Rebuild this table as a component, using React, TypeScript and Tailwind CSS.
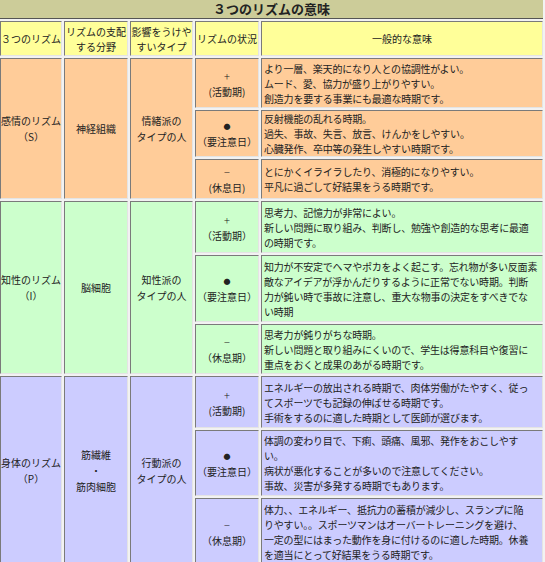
const font = { fontFamily: '"Noto Sans CJK JP", "Noto Sans", sans-serif' }

type Phase = { mark: string; label: string; lines: string[]; h: string }
type Rhythm = {
  name: string
  code: string
  field: string[]
  type: string
  bg: string
  phases: Phase[]
}

const rhythms: Rhythm[] = [
  {
    name: "感情のリズム",
    code: "（S）",
    field: ["神経組織"],
    type: "情緒派の",
    bg: "bg-[#ffcc99]",
    phases: [
      {
        mark: "+",
        label: "(活動期)",
        h: "h-[50px]",
        lines: [
          "より一層、楽天的になり人との協調性がよい。",
          "ムード、愛、協力が盛り上がりやすい。",
          "創造力を要する事業にも最適な時期です。",
        ],
      },
      {
        mark: "●",
        label: "（要注意日）",
        h: "h-[47px]",
        lines: [
          "反射機能の乱れる時期。",
          "過失、事故、失言、放言、けんかをしやすい。",
          "心臓発作、卒中等の発生しやすい時期です。",
        ],
      },
      {
        mark: "−",
        label: "(休息日)",
        h: "h-[40px]",
        lines: ["とにかくイライラしたり、消極的になりやすい。", "平凡に過ごして好結果をうる時期です。"],
      },
    ],
  },
  {
    name: "知性のリズム",
    code: "（I）",
    field: ["脳細胞"],
    type: "知性派の",
    bg: "bg-[#ccffcc]",
    phases: [
      {
        mark: "+",
        label: "（活動期）",
        h: "h-[52px]",
        lines: [
          "思考力、記憶力が非常によい。",
          "新しい問題に取り組み、判断し、勉強や創造的な思考に最適",
          "の時期です。",
        ],
      },
      {
        mark: "●",
        label: "（要注意日）",
        h: "h-[67px]",
        lines: [
          "知力が不安定でヘマやポカをよく起こす。忘れ物が多い反面素",
          "敵なアイデアが浮かんだりするように正常でない時期。判断",
          "力が鈍い時で事故に注意し、重大な物事の決定をすべきでな",
          "い時期",
        ],
      },
      {
        mark: "−",
        label: "（休息期）",
        h: "h-[50px]",
        lines: [
          "思考力が鈍りがちな時期。",
          "新しい問題と取り組みにくいので、学生は得意科目や復習に",
          "重点をおくと成果のあがる時期です。",
        ],
      },
    ],
  },
  {
    name: "身体のリズム",
    code: "（P）",
    field: ["筋繊維", "・", "筋肉細胞"],
    type: "行動派の",
    bg: "bg-[#ccccff]",
    phases: [
      {
        mark: "+",
        label: "(活動期)",
        h: "h-[52px]",
        lines: [
          "エネルギーの放出される時期で、肉体労働がたやすく、従っ",
          "てスポーツでも記録の伸ばせる時期です。",
          "手術をするのに適した時期として医師が選びます。",
        ],
      },
      {
        mark: "●",
        label: "（要注意日）",
        h: "h-[66px]",
        lines: [
          "体調の変わり目で、下痢、頭痛、風邪、発作をおこしやす",
          "い。",
          "病状が悪化することが多いので注意してください。",
          "事故、災害が多発する時期でもあります。",
        ],
      },
      {
        mark: "−",
        label: "（休息期）",
        h: "h-[68px]",
        lines: [
          "体力、、エネルギー、抵抗力の蓄積が減少し、スランプに陥",
          "りやすい。。スポーツマンはオーバートレーニングを避け、",
          "一定の型にはまった動作を身に付けるのに適した時期。休養",
          "を適当にとって好結果をうる時期です。",
        ],
      },
    ],
  },
]

const cell = "border border-t-[#7a7a7a] border-l-[#7a7a7a] border-b-[#e4e4e4] border-r-[#e4e4e4] p-0"

export default function App() {
  return (
    <div className="w-[545px] h-[562px] overflow-hidden bg-[#f2f2f2] text-[#222]" style={font}>
      <table className="w-[547px] table-fixed border-separate border-spacing-[2px] -mt-[2px] -ml-[2px] text-[10px] leading-[15px]">
        <colgroup>
          <col className="w-[62px]" />
          <col className="w-[64px]" />
          <col className="w-[63px]" />
          <col className="w-[64px]" />
          <col />
        </colgroup>
        <tbody>
          <tr className="h-[18px]">
            <td colSpan={5} className="bg-[#cccc99] p-0 text-center text-[13px] font-bold leading-[18px] border-b border-b-[#555]">
              ３つのリズムの意味
            </td>
          </tr>
          <tr className="h-[35px] bg-[#ffff99]">
            <td className={`${cell} text-center`}>３つのリズム</td>
            <td className={`${cell} text-center`}>
              リズムの支配
              <br />
              する分野
            </td>
            <td className={`${cell} text-center`}>
              影響をうけや
              <br />
              すいタイプ
            </td>
            <td className={`${cell} text-center`}>リズムの状況</td>
            <td className={`${cell} text-center`}>一般的な意味</td>
          </tr>
          {rhythms.map((r) =>
            r.phases.map((p, i) => (
              <tr key={r.name + i} className={`${p.h} ${r.bg}`}>
                {i === 0 && (
                  <>
                    <td rowSpan={3} className={`${cell} text-center leading-[16px]`}>
                      <div>{r.name}</div>
                      <div>{r.code}</div>
                    </td>
                    <td rowSpan={3} className={`${cell} text-center leading-[16px]`}>
                      {r.field.map((f) => (
                        <div key={f}>{f}</div>
                      ))}
                    </td>
                    <td rowSpan={3} className={`${cell} text-center leading-[16px]`}>
                      <div>{r.type}</div>
                      <div>タイプの人</div>
                    </td>
                  </>
                )}
                <td className={`${cell} text-center`}>
                  <div className={p.mark === "●" ? "text-[7px] leading-[16px]" : "text-[11px] leading-[16px] font-light"}>
                    {p.mark}
                  </div>
                  <div>{p.label}</div>
                </td>
                <td className={`${cell} px-[2px] align-middle overflow-hidden tracking-[-0.2px]`}>
                  {p.lines.map((l) => (
                    <div key={l} className="whitespace-nowrap">
                      {l}
                    </div>
                  ))}
                </td>
              </tr>
            ))
          )}
        </tbody>
      </table>
    </div>
  )
}
